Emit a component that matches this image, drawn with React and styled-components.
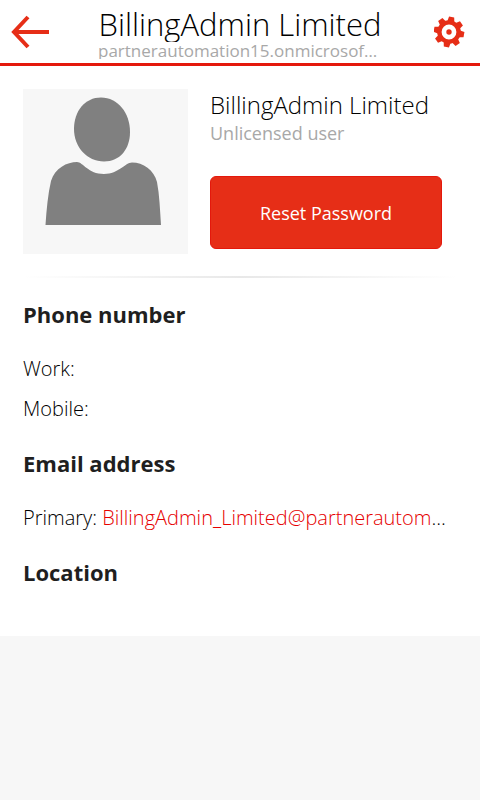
import React from "react";
import styled, { createGlobalStyle } from "styled-components";

const GlobalStyle = createGlobalStyle`
  body {
    margin: 0;
    background: #f7f7f7;
    font-family: "Open Sans", "Noto Sans", sans-serif;
    font-size: 20px;
    color: #1f1f1f;
  }
`;

const Header = styled.header`
  display: flex;
  justify-content: space-between;
  height: 63px;
  background: #fff;
  border-bottom: 3px solid #e4180c;
`;

const IconButton = styled.button`
  flex: none;
  display: flex;
  align-items: center;
  justify-content: center;
  width: 60px;
  padding: 0;
  border: 0;
  background: none;
  color: #e62e17;
  cursor: pointer;
`;

const HeaderText = styled.div`
  width: 284px;
  min-width: 0;
  padding-top: 6px;
  text-align: center;
`;

const Ellipsis = styled.div`
  overflow: hidden;
  white-space: nowrap;
  text-overflow: ellipsis;
`;

const Title = styled(Ellipsis).attrs({ as: "h1" })`
  margin: 0;
  font-size: 31px;
  font-weight: 300;
  line-height: 36px;
  color: #000;
`;

const Domain = styled(Ellipsis)`
  font-size: 17px;
  line-height: 17px;
  color: #a8a8a8;
`;

const Content = styled.main`
  padding: 23px 23px 27px;
  background: #fff;
`;

const Profile = styled.section`
  display: flex;
  gap: 22px;
`;

const Avatar = styled.div`
  flex: none;
  width: 165px;
  height: 165px;
  background: #f7f7f7;
`;

const ProfileInfo = styled.div`
  flex: 1;
  min-width: 0;
`;

const Name = styled(Ellipsis)`
  font-size: 24px;
  font-weight: 300;
  line-height: 31px;
  color: #000;
`;

const License = styled(Ellipsis)`
  font-size: 18px;
  line-height: 26px;
  color: #a8a8a8;
`;

const ResetButton = styled.button`
  display: block;
  width: calc(100% - 15px);
  height: 73px;
  margin-top: 30px;
  padding: 0;
  border: 1px solid #e4180c;
  border-radius: 6px;
  background: #e62e17;
  color: #fff;
  font-family: inherit;
  font-size: 18px;
  cursor: pointer;
`;

const Divider = styled.hr`
  height: 2px;
  margin: 22px 0 19px;
  border: 0;
  background: linear-gradient(to right, #fff, #e8e8e8 50%, #fff);
`;

const Heading = styled.h2`
  margin: 0 0 20px;
  font-size: 22px;
  font-weight: 700;
  line-height: 34px;
`;

const Section = styled.section`
  margin-bottom: 19px;

  &:last-child {
    margin-bottom: 0;
  }
`;

const Row = styled(Ellipsis)`
  margin-right: 7px;
  font-weight: 300;
  line-height: 36px;
  color: #000;

  & + & {
    margin-top: 4px;
  }
`;

const EmailLink = styled.a`
  color: #e60000;
  text-decoration: none;
`;

const teeth = [10, 55, 100, 145, 190, 235, 280, 325];

const BackIcon = () => (
  <svg width="40" height="34" viewBox="0 0 40 34" fill="none" stroke="currentColor" strokeWidth="4">
    <path d="M39 17H5M18 2L4 17L18 32" />
  </svg>
);

const GearIcon = () => (
  <svg width="32" height="32" viewBox="-15 -16 32 32" fill="currentColor">
    {teeth.map((angle) => (
      <path key={angle} d="M-3.6 -10L-2.6 -15.2H2.6L3.6 -10Z" transform={`rotate(${angle})`} />
    ))}
    <circle r="9.6" fill="none" stroke="currentColor" strokeWidth="4.4" />
    <circle r="2.7" />
  </svg>
);

const PersonIcon = () => (
  <svg width="165" height="165" viewBox="0 0 165 165" fill="#808080">
    <path d="M78 8.500C95 8.500 107 24 107 43C107 60 97 72.500 81 72.500C64 72.500 51 58 51 40C51 22 62 8.500 78 8.500Z" />
    <path d="M22.500 136C23.500 120 25 105 28 92C32 79 44 73 54 73C60 73 65 85 81 85C96 85 102 73.500 109 73.500C120 73.500 131 81 134 93C136.500 106 137 121 138 136Z" />
  </svg>
);

function App() {
  const email = "BillingAdmin_Limited@partnerautomation15.onmicrosoft.com";

  return (
    <>
      <GlobalStyle />
      <Header>
        <IconButton aria-label="Back">
          <BackIcon />
        </IconButton>
        <HeaderText>
          <Title>BillingAdmin Limited</Title>
          <Domain>partnerautomation15.onmicrosoft.com</Domain>
        </HeaderText>
        <IconButton aria-label="Settings">
          <GearIcon />
        </IconButton>
      </Header>
      <Content>
        <Profile>
          <Avatar>
            <PersonIcon />
          </Avatar>
          <ProfileInfo>
            <Name>BillingAdmin Limited</Name>
            <License>Unlicensed user</License>
            <ResetButton>Reset Password</ResetButton>
          </ProfileInfo>
        </Profile>
        <Divider />
        <Section>
          <Heading>Phone number</Heading>
          <Row>Work:</Row>
          <Row>Mobile:</Row>
        </Section>
        <Section>
          <Heading>Email address</Heading>
          <Row>
            Primary: <EmailLink href={`mailto:${email}`}>{email}</EmailLink>
          </Row>
        </Section>
        <Section>
          <Heading>Location</Heading>
        </Section>
      </Content>
    </>
  );
}

export default App;
